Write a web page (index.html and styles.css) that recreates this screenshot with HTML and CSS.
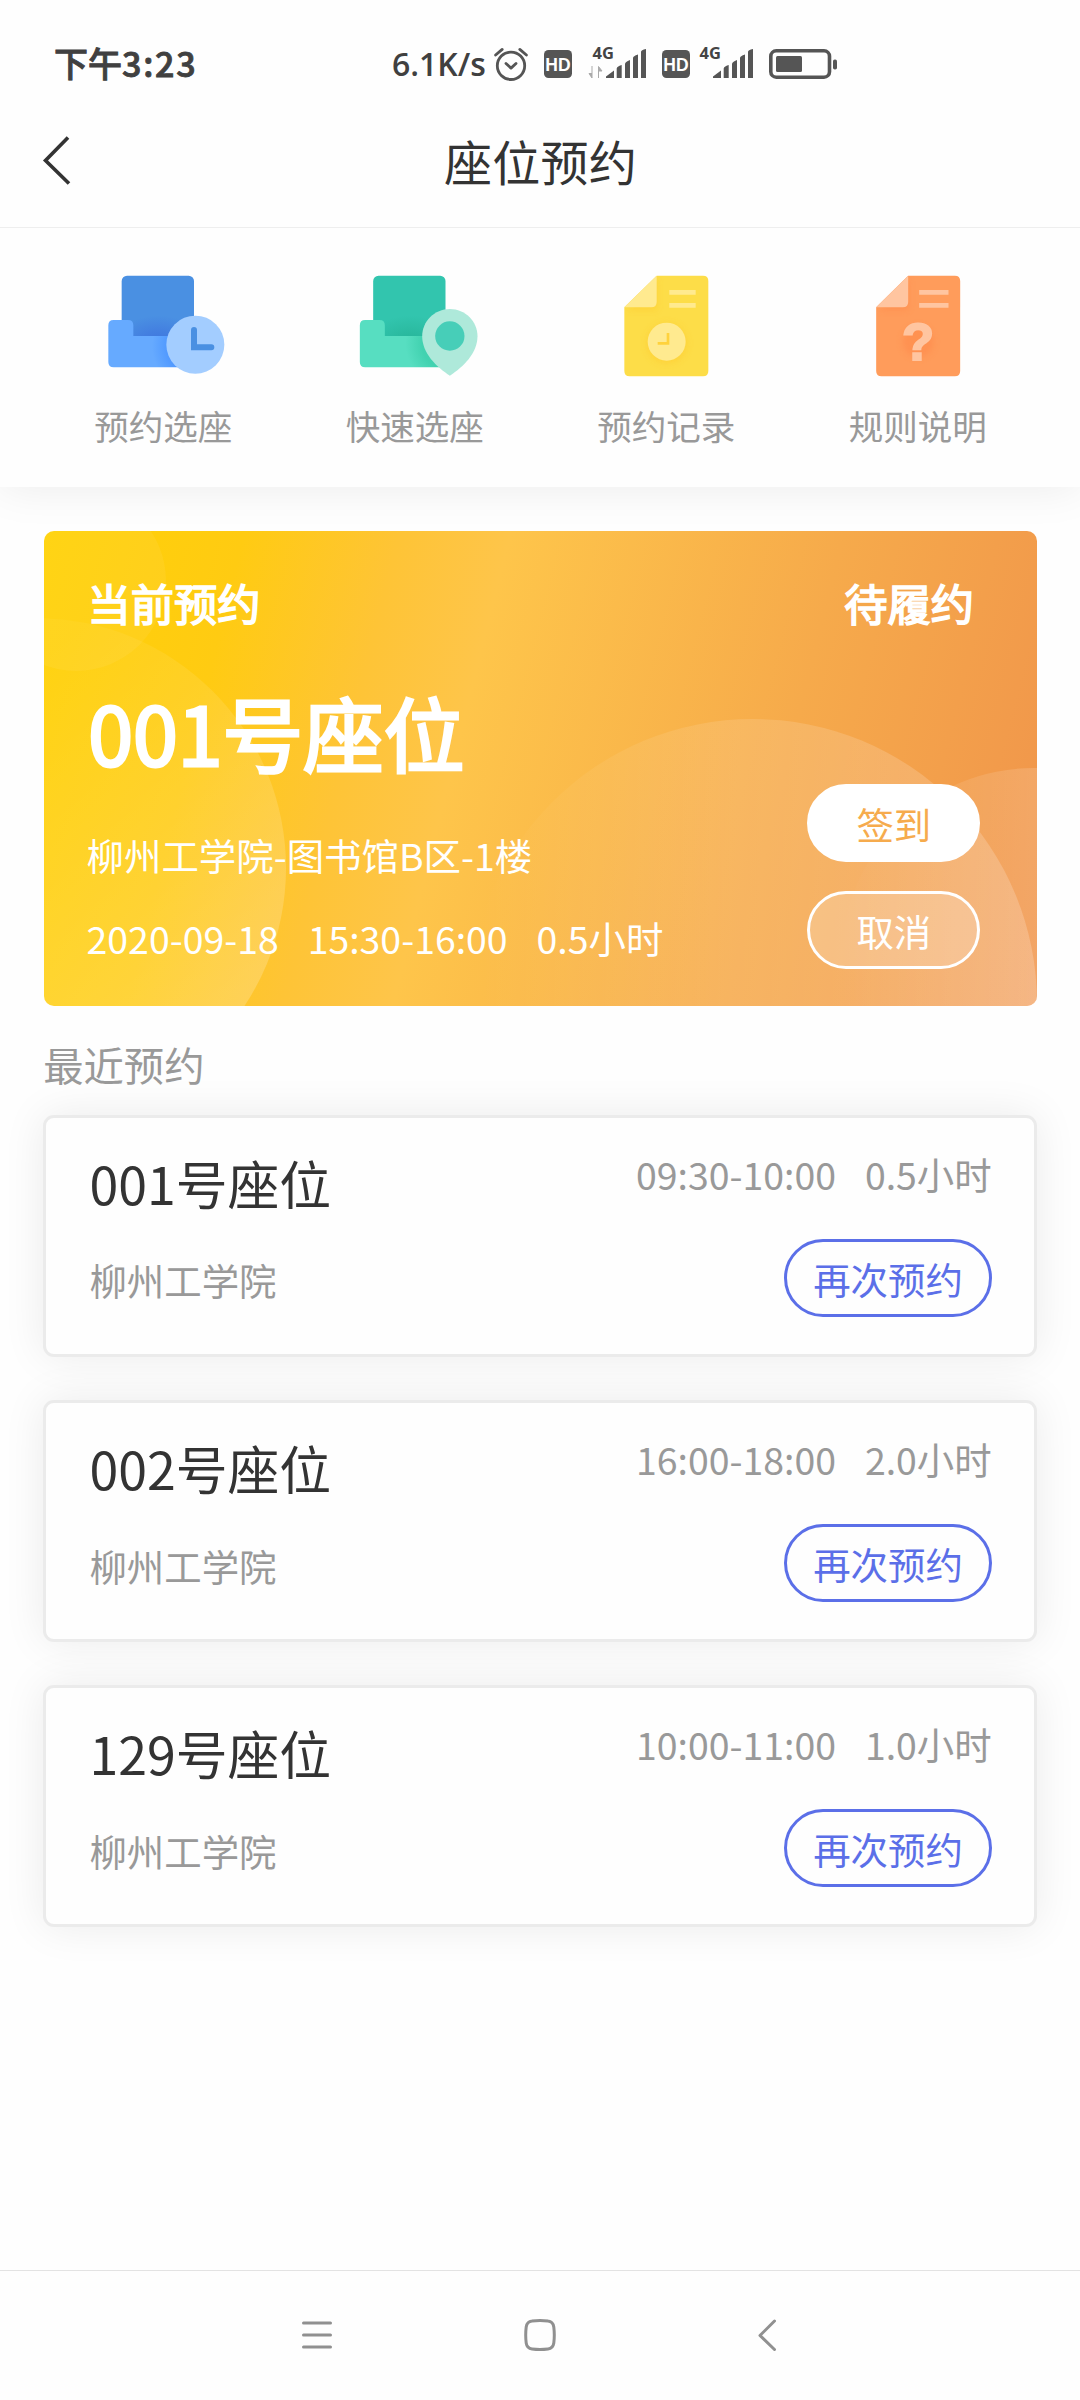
FILE: index.html
```html
<!DOCTYPE html>
<html lang="zh-CN">
<head>
<meta charset="utf-8">
<title>座位预约</title>
<link rel="stylesheet" href="styles.css">
</head>
<body>
<div class="status">
  <span class="clock">下午<span class="clock-digits">3:23</span></span>
  <span class="speed">6.1K/s</span>
  <svg class="st-alarm" width="34" height="36" viewBox="494 46 34 36" fill="none" stroke="#555" stroke-width="2.8" stroke-linecap="round" stroke-linejoin="round"><circle cx="511" cy="65.8" r="13.7"/><path d="M495.6 55l6.6-5.6M526.4 55l-6.6-5.6M506 63.5l5 4.6 5-4.6"/></svg>
  <svg class="st-hd" width="28" height="36" viewBox="0 46 28 36"><rect y="50" width="28" height="28" rx="4.5" fill="#555"/><text x="14" y="70.6" text-anchor="middle" class="hd-text">HD</text></svg>
  <svg class="st-sig1" width="60" height="48" viewBox="587 40 60 48" fill="#555"><text x="592.500" y="59" class="net-text">4G</text><path d="M592 66v12l-3-4.500h3M598.500 78v-11.500l3.500 4.500h-3.500" fill="#aaa" stroke="#aaa" stroke-width="1"/><path d="M606 78l0-1.500 8-6v7.500zM616.700 78v-9.500q0-2 5-3.500v13zM625 78v-14q0-2 5-4v18zM633 78v-20q0-2 5-3.500v23.500zM641 78v-26q0-2 5-3v29z"/></svg>
  <svg class="st-hd2" width="28" height="36" viewBox="0 46 28 36"><rect y="50" width="28" height="28" rx="4.500" fill="#555"/><text x="14" y="70.6" text-anchor="middle" class="hd-text">HD</text></svg>
  <svg class="st-sig2" width="56" height="48" viewBox="591 40 56 48" fill="#555"><text x="592.500" y="59" class="net-text">4G</text><path d="M606 78l0-1.500 8-6v7.500zM616.700 78v-9.500q0-2 5-3.500v13zM625 78v-14q0-2 5-4v18zM633 78v-20q0-2 5-3.500v23.500zM641 78v-26q0-2 5-3v29z"/></svg>
  <svg class="st-bat" width="69" height="36" viewBox="769 46 69 36"><rect x="770.8" y="50.800" width="58.700" height="26.400" rx="5.500" fill="none" stroke="#555" stroke-width="3.600"/><rect x="776" y="56" width="26" height="16" rx="1.500" fill="#555"/><rect x="833" y="59.500" width="4" height="10" rx="1.800" fill="#555"/></svg>
</div>

<header class="header">
  <svg class="back" width="30" height="52" viewBox="0 0 30 52" fill="none" stroke="#333" stroke-width="3.600"><path d="M27 3.500L4.500 26.500 28 49.500"/></svg>
  <h1 class="title">座位预约</h1>
</header>

<nav class="quick">
  <a class="quick-item">
    <svg width="124" height="110" viewBox="123 60 372 330">
      <defs>
        <radialGradient id="blueBack" gradientUnits="userSpaceOnUse" cx="295" cy="275" r="130" gradientTransform="translate(0 110) scale(1 .6)"><stop offset="0" stop-color="#3f77de"/><stop offset=".4" stop-color="#437fe0"/><stop offset="1" stop-color="#4a90e2"/></radialGradient>
        <radialGradient id="blueFront" gradientUnits="userSpaceOnUse" cx="406" cy="290" r="130"><stop offset=".62" stop-color="#4f98ff"/><stop offset="1" stop-color="#66aaff"/></radialGradient>
      </defs>
      <rect x="185" y="77" width="217" height="200" rx="16" fill="url(#blueBack)"/>
      <path d="M161 210h43q16 0 16 16v32h200v94H161q-16 0-16-16V226q0-16 16-16z" fill="url(#blueFront)"/>
      <circle cx="406" cy="284" r="87" fill="#a3cdff"/>
      <path d="M402 240v52h52" fill="none" stroke="#4a90e2" stroke-width="18" stroke-linecap="round"/>
    </svg>
    <span>预约选座</span>
  </a>
  <a class="quick-item">
    <svg width="124" height="110" viewBox="877.5 60 372 330" overflow="visible">
      <defs>
        <radialGradient id="greenBack" gradientUnits="userSpaceOnUse" cx="1050" cy="275" r="130" gradientTransform="translate(0 110) scale(1 .6)"><stop offset="0" stop-color="#27b599"/><stop offset=".4" stop-color="#2bbba1"/><stop offset="1" stop-color="#32c5ae"/></radialGradient>
        <radialGradient id="greenFront" gradientUnits="userSpaceOnUse" cx="1165" cy="280" r="130"><stop offset=".62" stop-color="#42d2b0"/><stop offset="1" stop-color="#57dec1"/></radialGradient>
      </defs>
      <rect x="938" y="77" width="217" height="200" rx="16" fill="url(#greenBack)"/>
      <path d="M914 210h43q16 0 16 16v32h180v94H914q-16 0-16-16V226q0-16 16-16z" fill="url(#greenFront)"/>
      <path d="M1168 177c46 0 83 37 83 82 0 50-42 92-83 118-41-26-83-68-83-118 0-45 37-82 83-82z" fill="#aee9da"/>
      <circle cx="1168" cy="258" r="44" fill="#47ceb8"/>
    </svg>
    <span>快速选座</span>
  </a>
  <a class="quick-item">
    <svg width="124" height="110" viewBox="132 60 372 330">
      <defs><filter id="soft" x="-40%" y="-40%" width="180%" height="180%"><feGaussianBlur stdDeviation="10"/></filter>
      <clipPath id="sheetA"><path d="M290 77h139q16 0 16 16v270q0 16-16 16H209q-16 0-16-16V172z"/></clipPath></defs>
      <path d="M290 77h139q16 0 16 16v270q0 16-16 16H209q-16 0-16-16V172z" fill="#fddd48"/>
      <g clip-path="url(#sheetA)"><g filter="url(#soft)" fill="#ffcf35" opacity=".7"><circle cx="320" cy="280" r="60"/><path d="M290 85v87q0 8-8 8H200z"/></g></g>
      <path d="M290 77v79q0 16-16 16h-81z" fill="#ffea8f"/>
      <path d="M328 120h79v14h-79zM328 159h79v14h-79z" fill="#ffea8f"/>
      <circle cx="320" cy="275" r="57" fill="#ffea8f"/>
      <path d="M324 249v31h-31" fill="none" stroke="#ffd23c" stroke-width="8"/>
    </svg>
    <span>预约记录</span>
  </a>
  <a class="quick-item">
    <svg width="124" height="110" viewBox="886.5 60 372 330">
      <defs><clipPath id="sheetB"><path d="M1043 77h140q16 0 16 16v270q0 16-16 16H963q-16 0-16-16V172z"/></clipPath></defs>
      <path d="M1043 77h140q16 0 16 16v270q0 16-16 16H963q-16 0-16-16V172z" fill="#ff9c5b"/>
      <g clip-path="url(#sheetB)"><g filter="url(#soft)" fill="#ff8748" opacity=".5"><circle cx="1073" cy="275" r="46"/><path d="M1043 85v87q0 8-8 8H955z"/></g></g>
      <path d="M1043 77v79q0 16-16 16h-80z" fill="#ffc5a0"/>
      <path d="M1076 120h88v14h-88zM1076 159h88v14h-88z" fill="#ffc5a0"/>
      <text x="1073" y="330" text-anchor="middle" class="question">?</text>
    </svg>
    <span>规则说明</span>
  </a>
</nav>

<main class="main">
  <section class="current">
    <svg class="bubbles" width="993" height="475" viewBox="44 531 993 475">
      <defs>
        <linearGradient id="fadeA" x1="0" y1="0" x2=".8" y2="1"><stop offset=".3" stop-color="#fff" stop-opacity=".04"/><stop offset="1" stop-color="#fff" stop-opacity=".22"/></linearGradient>
        <linearGradient id="fadeB" gradientUnits="userSpaceOnUse" x1="480" y1="0" x2="1037" y2="0"><stop offset="0" stop-color="#fff" stop-opacity="0"/><stop offset=".45" stop-color="#fff" stop-opacity=".12"/><stop offset="1" stop-color="#fff" stop-opacity=".2"/></linearGradient>
        <linearGradient id="fadeC" gradientUnits="userSpaceOnUse" x1="841" y1="0" x2="1037" y2="0"><stop offset="0" stop-color="#fff" stop-opacity="0"/><stop offset="1" stop-color="#fff" stop-opacity=".15"/></linearGradient>
      </defs>
      <circle cx="76" cy="581" r="90" fill="#fff" fill-opacity=".06"/>
      <circle cx="36" cy="868" r="250" fill="url(#fadeA)"/>
      <circle cx="753" cy="1003" r="284" fill="url(#fadeB)"/>
      <circle cx="1034" cy="961" r="193" fill="url(#fadeC)"/>
    </svg>
    <div class="current-info">
      <div class="current-label">当前预约</div>
      <div class="current-seat">001号座位</div>
      <div class="current-place">柳州工学院-图书馆B区-1楼</div>
      <div class="current-time">2020-09-18&nbsp;&nbsp; 15:30-16:00&nbsp;&nbsp; 0.5小时</div>
    </div>
    <div class="current-side">
      <div class="current-state">待履约</div>
      <button class="pill pill-fill">签到</button>
      <button class="pill pill-line">取消</button>
    </div>
  </section>

  <h2 class="recent-title">最近预约</h2>
  <article class="record">
    <div><div class="seat">001号座位</div><div class="school">柳州工学院</div></div>
    <div class="record-side"><div class="time">09:30-10:00&nbsp;&nbsp; 0.5小时</div><button class="again">再次预约</button></div>
  </article>
  <article class="record">
    <div><div class="seat">002号座位</div><div class="school">柳州工学院</div></div>
    <div class="record-side"><div class="time">16:00-18:00&nbsp;&nbsp; 2.0小时</div><button class="again">再次预约</button></div>
  </article>
  <article class="record">
    <div><div class="seat">129号座位</div><div class="school">柳州工学院</div></div>
    <div class="record-side"><div class="time">10:00-11:00&nbsp;&nbsp; 1.0小时</div><button class="again">再次预约</button></div>
  </article>
</main>

<footer class="sysnav">
  <svg width="50" height="40" viewBox="0 0 50 40" stroke="#909090" stroke-width="3" stroke-linecap="round"><path d="M11.500 8h27M11.500 20h27M11.500 32h27"/></svg>
  <svg width="32" height="40" viewBox="0 0 32 40" fill="none" stroke="#909090" stroke-width="3"><path d="M8 6Q16 5 24 6 29 6.500 29.800 12 30.800 20 29.800 28 29 33.500 24 34 16 35 8 34 3 33.500 2.200 28 1.200 20 2.200 12 3 6.500 8 6z"/></svg>
  <svg width="50" height="40" viewBox="0 0 50 40" fill="none" stroke="#909090" stroke-width="3" stroke-linecap="round" stroke-linejoin="round"><path d="M36.500 6L22 20.500 36.500 34.500"/></svg>
</footer>
</body>
</html>
```
FILE: styles.css
```css
* { box-sizing: border-box; }

body {
  margin: 0;
  width: 1080px;
  height: 2400px;
  display: flex;
  flex-direction: column;
  background: #fefefe;
  color: #333;
  font-family: "Noto Sans CJK SC", sans-serif;
  overflow: hidden;
}

h1, h2 { margin: 0; font-weight: 400; }
button { font-family: inherit; padding: 0; }
svg { display: block; flex: none; }

/* system status bar */
.status {
  height: 96px;
  padding: 32px 0 0 54px;
  display: flex;
  align-items: center;
  color: #404040;
  flex: none;
}
.clock { width: 337px; font-size: 34px; font-weight: 500; line-height: 62px; padding-bottom: 2px; white-space: nowrap; -webkit-text-stroke: .9px #404040; }
.clock-digits { letter-spacing: 1.8px; }
.speed { width: 103px; padding-left: 1px; font: 600 32px/64px "Open Sans", sans-serif; white-space: nowrap; }
.st-hd { margin-left: 16px; }
.st-sig1 { margin-left: 15px; }
.st-hd2 { margin-left: 15px; }
.st-sig2 { margin-left: 8px; }
.st-bat { margin-left: 15px; }
.hd-text { font: 700 17.5px "Liberation Sans", sans-serif; fill: #fff; }
.net-text { font: 700 16.5px "Open Sans", sans-serif; fill: #444; }

.header {
  position: relative;
  z-index: 2;
  height: 132px;
  flex: none;
  display: grid;
  grid-template-columns: 120px 1fr 120px;
  align-items: center;
  border-bottom: 1px solid #eee;
  background: #fefefe;
}
.back { margin: 0 0 4px 41px; }
.title { font-size: 48px; line-height: 70px; text-align: center; letter-spacing: .3px; padding: 0 0 4px 1px; }

/* shortcuts */
.quick {
  height: 259px;
  flex: none;
  padding: 42px 36.5px 0 37.5px;
  display: grid;
  grid-template-columns: repeat(4, 1fr);
  background: #fefefe;
  box-shadow: 0 0 43px rgba(0, 0, 0, .08);
}
.quick-item {
  display: flex;
  flex-direction: column;
  align-items: center;
  gap: 20px;
  color: #999;
  font-size: 34.56px;
  line-height: 50px;
}
.question { font: 700 158px "Liberation Sans", sans-serif; fill: #ffc5a0; stroke: #ffc5a0; stroke-width: 6px; }

.main { flex: 1; padding: 44px 43.2px 0; }

/* current booking */
.current {
  position: relative;
  height: 475.2px;
  margin-left: .8px;
  display: flex;
  justify-content: space-between;
  padding: 0 56.6px 0 43.2px;
  border-radius: 10px;
  overflow: hidden;
  color: #fff;
  background: linear-gradient(104deg, #ffd206 0%, #ffcb12 18%, #fec436 32%, #fec54a 42%, #f6aa4b 72%, #f0944b 100%);
}
.bubbles { position: absolute; left: 0; top: 0; }
.current-info, .current-side { position: relative; }
.current-label, .current-state {
  margin-top: 40.4px;
  font-size: 43.2px;
  line-height: 62px;
  -webkit-text-stroke: 1.7px #fff;
}
.current-label { padding-left: .4px; }
.current-seat {
  margin-top: 37.6px;
  padding-left: 1px;
  font-size: 80.64px;
  line-height: 120px;
  -webkit-text-stroke: 3px #fff;
}
.current-place { margin-top: 37.5px; margin-left: -.6px; font-size: 37.44px; line-height: 54px; }
.current-time { margin-top: 29px; margin-left: -.6px; font-size: 37.44px; line-height: 54px; white-space: pre; word-spacing: 1.27px; }
.current-side { display: flex; flex-direction: column; align-items: flex-end; }
.current-state { padding-right: 6.4px; margin-bottom: 150.6px; }
.pill {
  width: 172.8px;
  height: 77.8px;
  border: 3px solid #fff;
  border-radius: 39px;
  padding-top: 2px;
  font-size: 37.44px;
  line-height: 70px;
}
.pill-fill { background: #fff; color: #f6ab4d; }
.pill-line { margin-top: 29px; background: rgba(255, 255, 255, .2); color: #fff; }

/* recent bookings */
.recent-title { margin-top: 29px; height: 80px; font-size: 40.32px; line-height: 58px; color: #999; }
.record {
  height: 241.9px;
  margin: 0 -.5px 43.2px 0;
  padding: 0 42.6px 0 43.2px;
  display: flex;
  justify-content: space-between;
  border: 3px solid #ebebeb;
  border-radius: 11px;
  background: #fefefe;
  box-shadow: 0 0 43px rgba(0, 0, 0, .08);
}
.seat { margin-top: 27.7px; font-size: 51.84px; line-height: 74px; }
.school { margin-top: 33.6px; font-size: 37.44px; line-height: 54px; color: #999; }
.record-side { display: flex; flex-direction: column; align-items: flex-end; }
.time { margin-top: 28.9px; font-size: 37.44px; line-height: 54px; color: #999; white-space: pre; word-spacing: 1.27px; }
.again {
  margin-top: 38px;
  width: 207.4px;
  height: 77.8px;
  border: 3px solid #5b6fe8;
  border-radius: 39px;
  padding-top: 2px;
  background: none;
  color: #5b6fe8;
  font-size: 37.44px;
  line-height: 70px;
}

/* system navigation */
.sysnav {
  height: 130px;
  flex: none;
  display: flex;
  justify-content: center;
  align-items: center;
  gap: 182px;
  padding-bottom: 2px;
  border-top: 1px solid #e3e3e3;
}
```
